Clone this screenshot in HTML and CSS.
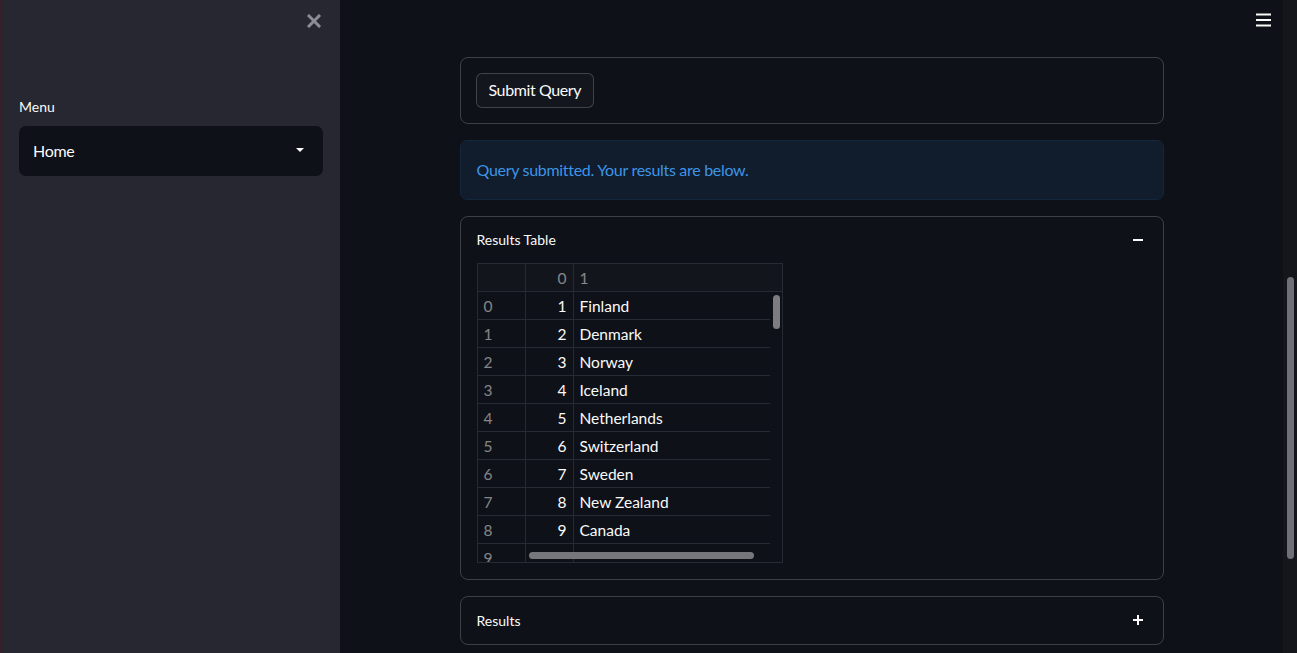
FILE: index.html
```html
<!DOCTYPE html>
<html>
<head>
<meta charset="utf-8">
<link rel="stylesheet" href="styles.css">
</head>
<body>
<div class="app">
  <aside class="sidebar">
    <button class="close" aria-label="Close sidebar">
      <svg width="14" height="14" viewBox="0 0 14 14"><path d="M2 2 L12 12 M12 2 L2 12" stroke="#8b8d96" stroke-width="3" stroke-linecap="square"/></svg>
    </button>
    <div class="field">
      <label class="label">Menu</label>
      <div class="select">
        <span>Home</span>
        <svg width="10" height="6" viewBox="0 0 10 6"><path d="M1 1 L9 1 L5 5 Z" fill="#fafafa"/></svg>
      </div>
    </div>
  </aside>
  <main class="main">
    <button class="menu-btn" aria-label="Main menu">
      <svg width="15" height="14" viewBox="0 0 15 14"><path d="M0 1.5 H15 M0 7 H15 M0 12.5 H15" stroke="#fafafa" stroke-width="2"/></svg>
    </button>
    <div class="content">
      <form class="form">
        <button type="button" class="btn">Submit Query</button>
      </form>
      <div class="alert">Query submitted. Your results are below.</div>
      <details class="expander" open>
        <summary class="summary"><span>Results Table</span>
          <svg width="12" height="12" viewBox="0 0 12 12"><path d="M1 6 H11" stroke="#fafafa" stroke-width="2"/></svg>
        </summary>
        <div class="exp-body">
          <div class="table">
            <div class="row head"><div class="cell idx"></div><div class="cell num">0</div><div class="cell txt">1</div></div>
            <div class="body">
              <div class="row"><div class="cell idx">0</div><div class="cell num">1</div><div class="cell txt">Finland</div></div>
              <div class="row"><div class="cell idx">1</div><div class="cell num">2</div><div class="cell txt">Denmark</div></div>
              <div class="row"><div class="cell idx">2</div><div class="cell num">3</div><div class="cell txt">Norway</div></div>
              <div class="row"><div class="cell idx">3</div><div class="cell num">4</div><div class="cell txt">Iceland</div></div>
              <div class="row"><div class="cell idx">4</div><div class="cell num">5</div><div class="cell txt">Netherlands</div></div>
              <div class="row"><div class="cell idx">5</div><div class="cell num">6</div><div class="cell txt">Switzerland</div></div>
              <div class="row"><div class="cell idx">6</div><div class="cell num">7</div><div class="cell txt">Sweden</div></div>
              <div class="row"><div class="cell idx">7</div><div class="cell num">8</div><div class="cell txt">New Zealand</div></div>
              <div class="row"><div class="cell idx">8</div><div class="cell num">9</div><div class="cell txt">Canada</div></div>
              <div class="row last"><div class="cell idx">9</div><div class="cell num"></div><div class="cell txt"></div></div>
            </div>
            <div class="vthumb"></div>
            <div class="hthumb"></div>
          </div>
        </div>
      </details>
      <details class="expander">
        <summary class="summary"><span>Results</span>
          <svg width="12" height="12" viewBox="0 0 12 12"><path d="M1 6 H11 M6 1 V11" stroke="#fafafa" stroke-width="2"/></svg>
        </summary>
      </details>
    </div>
  </main>
  <div class="scrolltrack"><div class="scrollthumb"></div></div>
</div>
</body>
</html>
```

FILE: styles.css
```css
* { box-sizing: border-box; }
html, body {
  margin: 0;
  height: 653px;
  overflow: hidden;
  background: #0e1117;
  color: #fafafa;
  font-family: "Lato", "Open Sans", sans-serif;
}
.app {
  display: flex;
  height: 653px;
}
.sidebar {
  width: 340px;
  flex: none;
  background: #262730;
  border-left: 2px solid #3a1c2a;
  position: relative;
  padding: 97px 16px 0 17px;
}
.close {
  position: absolute;
  top: 14px;
  left: 305px;
  background: none;
  border: 0;
  padding: 0;
  width: 14px;
  height: 14px;
}
.close svg { display: block; }
.label {
  display: block;
  font-size: 14px;
  line-height: 20px;
  margin-bottom: 9px;
}
.select {
  width: 304px;
  height: 50px;
  background: #0e1117;
  border-radius: 7px;
  display: flex;
  align-items: center;
  justify-content: space-between;
  padding: 0 18px 2px 14px;
  font-size: 16px;
  letter-spacing: -0.3px;
}
.main {
  flex: 1;
  position: relative;
  min-width: 0;
}
.menu-btn {
  position: absolute;
  top: 13px;
  right: 12px;
  background: none;
  border: 0;
  padding: 0;
}
.menu-btn svg { display: block; }
.content {
  width: 704px;
  margin: 0 auto;
  padding-top: 57px;
  display: flex;
  flex-direction: column;
  gap: 16px;
}
.form {
  margin: 0;
  border: 1px solid rgba(250, 250, 250, 0.2);
  border-radius: 8px;
  padding: 15px;
}
.btn {
  height: 35px;
  padding: 0 12px 2px;
  background: #13161d;
  color: #fafafa;
  border: 1px solid rgba(250, 250, 250, 0.2);
  border-radius: 6px;
  font-family: inherit;
  font-size: 16px;
  letter-spacing: -0.4px;
}
.alert {
  height: 60px;
  border-radius: 7px;
  background: #111c2c;
  border: 1px solid #12263c;
  color: #3d95e6;
  font-size: 16px;
  letter-spacing: -0.3px;
  padding: 0 16px 2px;
  display: flex;
  align-items: center;
}
.expander {
  border: 1px solid rgba(250, 250, 250, 0.2);
  border-radius: 8px;
}
.summary {
  list-style: none;
  height: 46px;
  display: flex;
  align-items: center;
  justify-content: space-between;
  padding: 0 19px 1px 16px;
  font-size: 14px;
  cursor: pointer;
}
.summary::-webkit-details-marker { display: none; }
.summary svg { display: block; }
.expander:not([open]) .summary { height: 47px; }
.exp-body {
  padding: 0 16px 16px;
}
.table {
  position: relative;
  width: 306px;
  height: 300px;
  border: 1px solid #262a33;
  overflow: hidden;
  font-size: 15.5px;
}
.row {
  display: grid;
  grid-template-columns: 48px 48px 1fr;
  height: 28px;
  border-bottom: 1px solid #262a33;
}
.head {
  background: #12151c;
  color: rgba(250, 250, 250, 0.5);
}
.body .row { margin-right: 12px; }
.cell {
  display: flex;
  align-items: center;
  border-right: 1px solid #262a33;
  white-space: nowrap;
}
.cell.txt { border-right: 0; padding-left: 6px; }
.cell.idx { padding-left: 6px; color: rgba(250, 250, 250, 0.5); }
.cell.num { justify-content: flex-end; padding-right: 6px; }
.vthumb {
  position: absolute;
  left: 295px;
  top: 31px;
  width: 7px;
  height: 34px;
  border-radius: 4px;
  background: #7c7d83;
}
.hthumb {
  position: absolute;
  left: 51px;
  top: 288px;
  width: 225px;
  height: 7px;
  border-radius: 4px;
  background: #76777d;
}
.scrolltrack {
  width: 14px;
  flex: none;
  background: #14161b;
  position: relative;
}
.scrollthumb {
  position: absolute;
  left: 4px;
  top: 277px;
  width: 7px;
  height: 282px;
  border-radius: 4px;
  background: #6e7077;
}
```
